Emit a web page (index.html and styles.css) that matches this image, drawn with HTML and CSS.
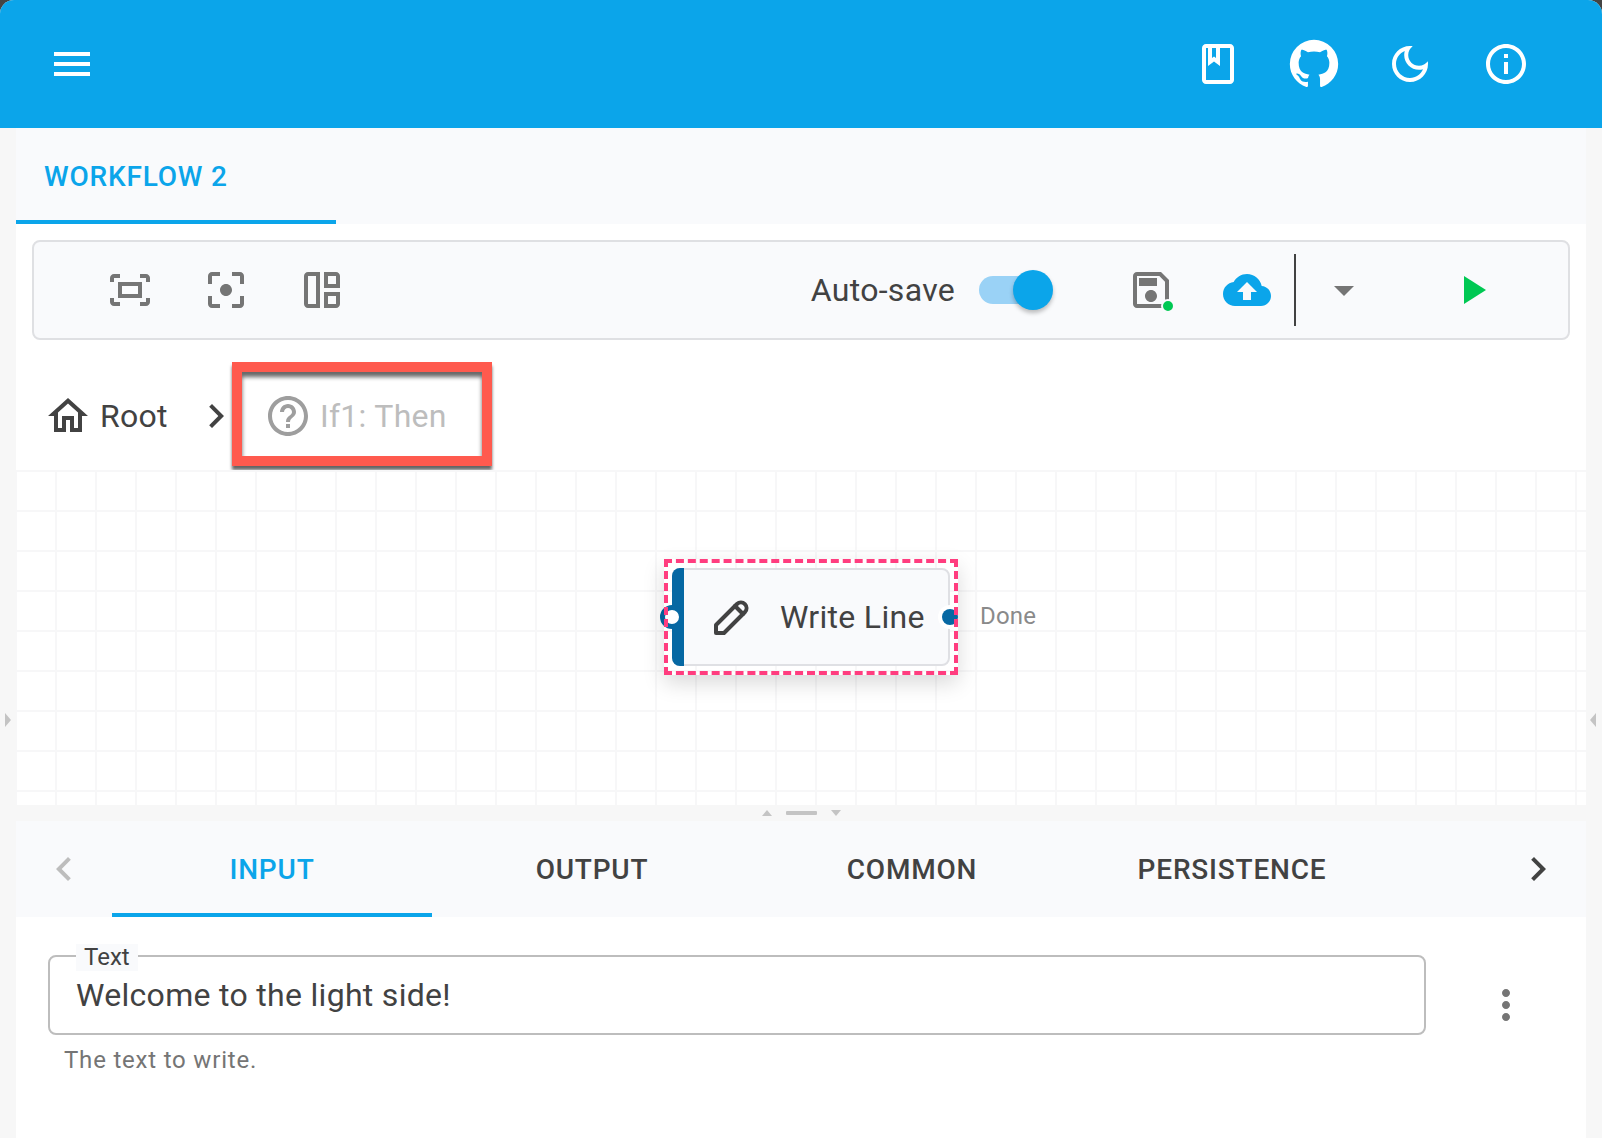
FILE: index.html
```html
<!DOCTYPE html>
<html lang="en">
<head>
    <meta charset="UTF-8">
    <title>Workflow designer</title>
    <link rel="stylesheet" href="styles.css">
</head>
<body>
    <div class="app">
        <header class="appbar">
            <div class="menu-btn"><span></span><span></span><span></span></div>
            <div class="appbar-actions">
                <svg class="icon" viewBox="0 0 24 24"><path d="M18 2H6c-1.1 0-2 .9-2 2v16c0 1.1.9 2 2 2h12c1.1 0 2-.9 2-2V4c0-1.1-.9-2-2-2zM9 4h2v5l-1-.75L9 9V4zm9 16H6V4h1v9l3-2.25L13 13V4h5v16z"/></svg>
                <svg class="icon icon-github" viewBox="0 0 24 24"><path d="M12,2A10,10 0 0,0 2,12C2,16.42 4.87,20.17 8.84,21.5C9.34,21.58 9.5,21.27 9.5,21C9.5,20.77 9.5,20.14 9.5,19.31C6.73,19.91 6.14,17.97 6.14,17.97C5.68,16.81 5.03,16.5 5.03,16.5C4.12,15.88 5.1,15.9 5.1,15.9C6.1,15.97 6.63,16.93 6.63,16.93C7.5,18.45 8.97,18 9.54,17.76C9.63,17.11 9.89,16.67 10.17,16.42C7.95,16.17 5.64,15.31 5.64,11.5C5.64,10.39 6,9.5 6.65,8.79C6.55,8.54 6.2,7.5 6.75,6.15C6.75,6.15 7.59,5.88 9.5,7.17C10.29,6.95 11.15,6.84 12,6.84C12.85,6.84 13.71,6.95 14.5,7.17C16.41,5.88 17.25,6.15 17.25,6.15C17.8,7.5 17.45,8.54 17.35,8.79C18,9.5 18.36,10.39 18.36,11.5C18.36,15.32 16.04,16.16 13.81,16.41C14.17,16.72 14.5,17.33 14.5,18.26C14.5,19.6 14.5,20.68 14.5,21C14.5,21.27 14.66,21.59 15.17,21.5C19.14,20.16 22,16.42 22,12A10,10 0 0,0 12,2Z"/></svg>
                <svg class="icon" viewBox="0 0 24 24"><path d="M9.37,5.51C9.19,6.15,9.1,6.82,9.1,7.5c0,4.08,3.32,7.4,7.4,7.4c0.68,0,1.35-0.09,1.99-0.27C17.45,17.19,14.93,19,12,19c-3.86,0-7-3.14-7-7C5,9.07,6.81,6.55,9.37,5.51z M12,3c-4.97,0-9,4.03-9,9s4.03,9,9,9s9-4.03,9-9c0-0.46-0.04-0.92-0.1-1.36c-0.98,1.37-2.58,2.26-4.4,2.26c-2.98,0-5.4-2.42-5.4-5.4c0-1.81,0.89-3.42,2.26-4.4C12.92,3.04,12.46,3,12,3L12,3z"/></svg>
                <svg class="icon" viewBox="0 0 24 24"><path d="M11 7h2v2h-2zm0 4h2v6h-2zm1-9C6.48 2 2 6.48 2 12s4.48 10 10 10 10-4.48 10-10S17.52 2 12 2zm0 18c-4.41 0-8-3.59-8-8s3.59-8 8-8 8 3.59 8 8-3.59 8-8 8z"/></svg>
            </div>
        </header>

        <div class="shell">
            <div class="side side-left"><i class="tri tri-right"></i></div>

            <main class="center">
                <div class="doc-tabs">
                    <div class="doc-tab">Workflow 2</div>
                </div>

                <div class="toolbar-wrap">
                    <div class="toolbar">
                        <div class="tool-group">
                            <svg class="icon gray" viewBox="0 0 24 24"><path d="M17 4h3c1.1 0 2 .9 2 2v2h-2V6h-3V4zM4 8V6h3V4H4c-1.1 0-2 .9-2 2v2h2zm16 8v2h-3v2h3c1.1 0 2-.9 2-2v-2h-2zM7 18H4v-2H2v2c0 1.1.9 2 2 2h3v-2zM18 8H6v8h12V8zm-2 6H8v-4h8v4z"/></svg>
                            <svg class="icon gray" viewBox="0 0 24 24"><path d="M12 9c-1.66 0-3 1.34-3 3s1.34 3 3 3 3-1.34 3-3-1.34-3-3-3zM5 15H3v4c0 1.1.9 2 2 2h4v-2H5v-4zM5 5h4V3H5c-1.1 0-2 .9-2 2v4h2V5zm14-2h-4v2h4v4h2V5c0-1.1-.9-2-2-2zm0 16h-4v2h4c1.1 0 2-.9 2-2v-4h-2v4z"/></svg>
                            <svg class="icon gray" viewBox="0 0 24 24"><path d="M11 21H5c-1.1 0-2-.9-2-2V5c0-1.1.9-2 2-2h6v18zM9 5H5v14h4V5zm4 6V3h6c1.1 0 2 .9 2 2v6h-8zm6-2V5h-4v4h4zm-6 4h8v6c0 1.1-.9 2-2 2h-6v-8zm2 2v4h4v-4h-4z"/></svg>
                        </div>

                        <div class="tool-right">
                            <span class="autosave-label">Auto-save</span>
                            <div class="switch"><span class="switch-thumb"></span></div>
                            <div class="save-btn">
                                <svg class="icon gray" viewBox="0 0 24 24"><path d="M17 3H5c-1.11 0-2 .9-2 2v14c0 1.1.89 2 2 2h14c1.1 0 2-.9 2-2V7l-4-4zm2 16H5V5h11.17L19 7.83V19zm-7-7c-1.66 0-3 1.34-3 3s1.34 3 3 3 3-1.34 3-3-1.34-3-3-3zM6 6h9v4H6z"/></svg>
                                <span class="save-dot"></span>
                            </div>
                            <svg class="icon blue cloud" viewBox="0 0 24 24"><path d="M19.35 10.04C18.67 6.59 15.64 4 12 4 9.11 4 6.6 5.64 5.35 8.04 2.34 8.36 0 10.91 0 14c0 3.31 2.69 6 6 6h13c2.76 0 5-2.24 5-5 0-2.64-2.05-4.78-4.65-4.96zM14 13v4h-4v-4H7l5-5 5 5h-3z"/></svg>
                            <span class="tool-divider"></span>
                            <svg class="icon gray caret" viewBox="0 0 24 24"><path d="M7 10l5 5 5-5z"/></svg>
                            <svg class="icon green play" viewBox="0 0 24 24"><path d="M8 5v14l11-7z"/></svg>
                        </div>
                    </div>
                </div>

                <nav class="crumbs">
                    <svg class="icon dark" viewBox="0 0 24 24"><path d="M12 5.69l5 4.5V18h-2v-6H9v6H7v-7.81l5-4.5M12 3L2 12h3v8h6v-6h2v6h6v-8h3L12 3z"/></svg>
                    <span class="crumb-text">Root</span>
                    <svg class="icon dark crumb-sep" viewBox="0 0 24 24"><path d="M10 6L8.59 7.41 13.17 12l-4.58 4.59L10 18l6-6z"/></svg>
                    <div class="crumb-current">
                        <svg class="icon muted" viewBox="0 0 24 24"><path d="M11 18h2v-2h-2v2zm1-16C6.48 2 2 6.48 2 12s4.48 10 10 10 10-4.48 10-10S17.52 2 12 2zm0 18c-4.41 0-8-3.59-8-8s3.59-8 8-8 8 3.59 8 8-3.59 8-8 8zm0-14c-2.21 0-4 1.79-4 4h2c0-1.1.9-2 2-2s2 .9 2 2c0 2-3 1.75-3 5h2c0-2.25 3-2.5 3-5 0-2.21-1.79-4-4-4z"/></svg>
                        <span class="crumb-text">If1: Then</span>
                    </div>
                </nav>

                <section class="canvas">
                    <div class="node-frame">
                        <div class="node">
                            <span class="node-bar"></span>
                            <svg class="pencil" viewBox="0 0 24 24"><path d="M4 20h4l10.5-10.5a2.83 2.83 0 0 0-4-4L4 16v4"/><path d="M13.5 6.5l4 4"/></svg>
                            <span class="node-title">Write Line</span>
                        </div>
                        <span class="port port-in"></span>
                        <span class="port port-out"></span>
                    </div>
                    <span class="port-label">Done</span>
                </section>

                <section class="panel">
                    <div class="gutter">
                        <i class="tri tri-up"></i>
                        <span class="gutter-bar"></span>
                        <i class="tri tri-down"></i>
                    </div>

                    <div class="panel-tabs">
                        <div class="scroll-btn">
                            <svg class="icon muted-light" viewBox="0 0 24 24"><path d="M15.41 7.41L14 6l-6 6 6 6 1.41-1.41L10.83 12z"/></svg>
                        </div>
                        <div class="panel-tab active">Input</div>
                        <div class="panel-tab">Output</div>
                        <div class="panel-tab">Common</div>
                        <div class="panel-tab">Persistence</div>
                        <div class="scroll-btn scroll-end">
                            <svg class="icon dark" viewBox="0 0 24 24"><path d="M10 6L8.59 7.41 13.17 12l-4.58 4.59L10 18l6-6z"/></svg>
                        </div>
                    </div>

                    <div class="panel-body">
                        <div class="field-row">
                            <div class="field">
                                <span class="field-label">Text</span>
                                <div class="field-value">Welcome to the light side!</div>
                            </div>
                            <svg class="icon gray kebab" viewBox="0 0 24 24"><path d="M12 8c1.1 0 2-.9 2-2s-.9-2-2-2-2 .9-2 2 .9 2 2 2zm0 2c-1.1 0-2 .9-2 2s.9 2 2 2 2-.9 2-2-.9-2-2-2zm0 6c-1.1 0-2 .9-2 2s.9 2 2 2 2-.9 2-2-.9-2-2-2z"/></svg>
                        </div>
                        <p class="field-help">The text to write.</p>
                    </div>
                </section>
            </main>

            <div class="side side-right"><i class="tri tri-left"></i></div>
        </div>
    </div>
</body>
</html>
```

FILE: styles.css
```css
* {
    box-sizing: border-box;
}

body {
    margin: 0;
    height: 100vh;
    overflow: hidden;
    background-color: #444;
    font-family: Roboto, "Liberation Sans", sans-serif;
    color: #424242;
}

.app {
    height: 100%;
    display: flex;
    flex-direction: column;
    background-color: #fff;
    border-radius: 14px 14px 0 0;
    overflow: hidden;
}

.icon {
    width: 48px;
    height: 48px;
    flex: none;
    fill: currentColor;
}

.gray { color: #757575; }
.blue { color: #0ba5ea; }
.green { color: #00c853; }
.dark { color: #424242; }
.muted { color: #9e9e9e; }
.muted-light { color: #bdbdbd; }

/* top bar */
.appbar {
    height: 128px;
    flex: none;
    display: flex;
    align-items: center;
    justify-content: space-between;
    padding: 0 72px 0 54px;
    background-color: #0ba5ea;
    color: #fff;
}

.menu-btn {
    width: 36px;
    display: flex;
    flex-direction: column;
    gap: 6px;
}

.menu-btn span {
    height: 4px;
    background-color: #fff;
}

.appbar-actions {
    display: flex;
    align-items: center;
    gap: 48px;
}

.icon-github {
    width: 58px;
    height: 58px;
    margin: 0 -5px;
}

/* main area */
.shell {
    flex: 1;
    display: flex;
    min-height: 0;
}

.side {
    width: 16px;
    flex: none;
    background-color: #f7f7f7;
    padding-top: 585px;
}

.center {
    flex: 1;
    min-width: 0;
    display: flex;
    flex-direction: column;
}

.tri {
    display: block;
    width: 0;
    height: 0;
    border-style: solid;
    border-color: transparent;
}

.tri-right {
    margin-left: 5px;
    border-width: 7px 0 7px 6px;
    border-left-color: #c4c4c4;
}

.tri-left {
    margin-left: 4px;
    border-width: 7px 6px 7px 0;
    border-right-color: #c4c4c4;
}

.tri-up {
    border-width: 0 5.5px 6px;
    border-bottom-color: #c4c4c4;
}

.tri-down {
    border-width: 6px 5.5px 0;
    border-top-color: #c4c4c4;
}

.doc-tabs {
    height: 96px;
    flex: none;
    background-color: #f9fafc;
}

.doc-tab {
    width: 320px;
    height: 96px;
    padding-left: 28px;
    line-height: 98px;
    border-bottom: 4px solid #0ba5ea;
    color: #0ba5ea;
    font-size: 28px;
    font-weight: 500;
    letter-spacing: 0.02857em;
    text-transform: uppercase;
}

.toolbar-wrap {
    padding: 16px 16px 0;
    flex: none;
}

.toolbar {
    height: 100px;
    display: flex;
    align-items: center;
    justify-content: space-between;
    padding: 0 0 0 72px;
    background-color: #f9fafc;
    border: 2px solid #dfe0e3;
    border-radius: 8px;
}

.tool-group {
    display: flex;
    gap: 48px;
}

.tool-right {
    display: flex;
    align-items: center;
    padding-right: 72px;
}

.autosave-label {
    font-size: 32px;
    letter-spacing: 0.00938em;
    margin-right: 24px;
}

.switch {
    width: 70px;
    height: 28px;
    position: relative;
    background-color: #9ad2f6;
    border-radius: 14px;
    margin-right: 78px;
}

.switch-thumb {
    position: absolute;
    right: -4px;
    top: -6px;
    width: 40px;
    height: 40px;
    background-color: #0ba5ea;
    border-radius: 50%;
    box-shadow: 0 3px 4px rgba(0,0,0,0.25);
}

.save-btn {
    width: 48px;
    height: 48px;
    position: relative;
    margin-right: 48px;
}

.save-dot {
    position: absolute;
    left: 34px;
    top: 33px;
    background-color: #00c853;
    border: 2px solid #f9fafc;
    border-radius: 50%;
    box-sizing: content-box;
    width: 10px;
    height: 10px;
}

.tool-divider {
    width: 2px;
    height: 72px;
    margin: 0 24px 0 23px;
    background-color: #424242;
}

.caret {
    margin-right: 80px;
}

/* breadcrumb */
.crumbs {
    height: 130px;
    flex: none;
    display: flex;
    align-items: flex-start;
    padding: 22px 0 0 28px;
}

.crumbs > .icon {
    margin-top: 30px;
}

.crumbs > .crumb-text {
    margin: 30px 24px 0 8px;
    line-height: 48px;
}

.crumb-text {
    font-size: 32px;
    letter-spacing: 0.00938em;
}

.crumb-sep {
    margin-right: -8px;
}

.crumb-current {
    width: 260px;
    height: 104px;
    display: flex;
    align-items: center;
    gap: 8px;
    padding: 4px 0 0 22px;
    border: 10px solid #ff5a4e;
    color: #bdbdbd;
    box-shadow: 0 4px 3px rgba(0,0,0,0.6), inset 0 5px 4px rgba(0,0,0,0.6);
}

/* canvas */
.canvas {
    height: 335px;
    flex: none;
    position: relative;
    overflow: hidden;
    background-color: #fff;
    background-image:
        linear-gradient(#f7f7f8 2px, transparent 2px),
        linear-gradient(90deg, #f7f7f8 2px, transparent 2px);
    background-size: 40px 40px;
    background-position: 39px 0;
}

.node-frame {
    position: absolute;
    left: 648px;
    top: 89px;
    width: 294px;
    height: 116px;
    padding: 9px 8px;
}

.node-frame::after {
    content: "";
    position: absolute;
    inset: 0;
    border: 4px dashed #ff3d7f;
    box-shadow: 0 8px 20px rgba(0,0,0,0.15);
    pointer-events: none;
}

.node {
    height: 98px;
    display: flex;
    align-items: center;
    position: relative;
    padding-left: 34px;
    background-color: #f9fafc;
    border: 2px solid #dfe0e4;
    border-radius: 8px;
}

.node-bar {
    position: absolute;
    left: -2px;
    top: -2px;
    bottom: -2px;
    width: 12px;
    background-color: #0668a3;
    border-radius: 8px 0 0 8px;
}

.pencil {
    width: 48px;
    height: 48px;
    fill: none;
    stroke: #424242;
    stroke-width: 2;
    stroke-linecap: round;
    stroke-linejoin: round;
    margin-right: 24px;
}

.node-title {
    font-size: 32px;
    letter-spacing: 0.00938em;
}

.port {
    position: absolute;
    border-radius: 50%;
}

.port-in {
    left: -4px;
    top: 46px;
    width: 24px;
    height: 24px;
    background-color: #fff;
    border: 5px solid #0668a3;
}

.port-out {
    left: 278px;
    top: 50px;
    width: 16px;
    height: 16px;
    background-color: #0668a3;
    box-shadow: 0 0 0 4px #fff;
}

.port-label {
    position: absolute;
    left: 964px;
    top: 131px;
    font-size: 24px;
    line-height: 30px;
    letter-spacing: 0.2px;
    color: #8a8a8a;
}

/* bottom panel */
.panel {
    flex: 1;
    min-height: 0;
    display: flex;
    flex-direction: column;
}

.gutter {
    height: 16px;
    flex: none;
    display: flex;
    align-items: center;
    justify-content: center;
    gap: 14px;
    background-color: #f7f7f7;
}

.gutter-bar {
    width: 31px;
    height: 4px;
    background-color: #c4c4c4;
    border-radius: 1px;
}

.panel-tabs {
    height: 96px;
    flex: none;
    display: flex;
    background-color: #f9fafc;
}

.scroll-btn {
    width: 96px;
    display: flex;
    align-items: center;
    justify-content: center;
}

.scroll-end {
    margin-left: auto;
}

.panel-tab {
    width: 320px;
    line-height: 98px;
    text-align: center;
    font-size: 28px;
    font-weight: 500;
    letter-spacing: 0.02857em;
    text-transform: uppercase;
}

.panel-tab.active {
    color: #0ba5ea;
    border-bottom: 4px solid #0ba5ea;
}

.panel-body {
    padding: 38px 56px 0 32px;
}

.field-row {
    display: flex;
    align-items: center;
    gap: 56px;
}

.field {
    flex: 1;
    height: 80px;
    position: relative;
    display: flex;
    align-items: center;
    padding-left: 26px;
    border: 2px solid #bdbdbd;
    border-radius: 8px;
}

.field-label {
    position: absolute;
    left: 26px;
    top: -13px;
    padding: 0 8px;
    font-size: 24px;
    line-height: 27px;
    background-color: #f9fafc;
}

.field-value {
    font-size: 32px;
    letter-spacing: 0.00938em;
}

.kebab {
    margin-top: 20px;
}

.field-help {
    margin: 9px 0 0 16px;
    font-size: 24px;
    line-height: 32px;
    letter-spacing: 0.03333em;
    color: #757575;
}
```
